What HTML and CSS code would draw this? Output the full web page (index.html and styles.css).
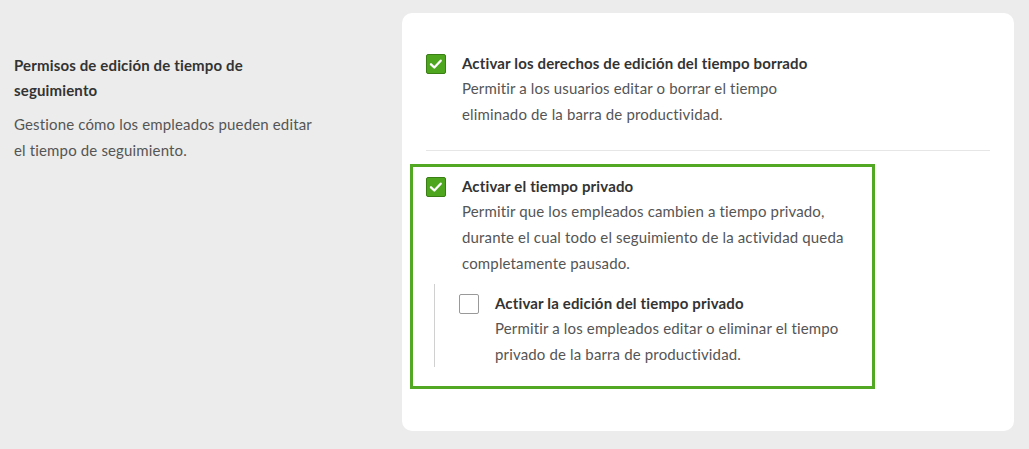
FILE: index.html
```html
<!DOCTYPE html>
<html lang="es">
<head>
<meta charset="utf-8">
<title>Permisos</title>
<link rel="stylesheet" href="styles.css">
</head>
<body>
<div class="page">
  <div class="intro">
    <h2 class="intro-title">Permisos de edición de tiempo de seguimiento</h2>
    <p class="intro-desc">Gestione cómo los empleados pueden editar el tiempo de seguimiento.</p>
  </div>
  <div class="card">
    <div class="option first">
      <span class="cb checked"><svg viewBox="0 0 20 20" width="20" height="20"><path d="M5 10.3l3.3 3.2 6.4-6.8" fill="none" stroke="#fff" stroke-width="2.3" stroke-linecap="round" stroke-linejoin="round"/></svg></span>
      <div class="text">
        <div class="title">Activar los derechos de edición del tiempo borrado</div>
        <div class="desc">Permitir a los usuarios editar o borrar el tiempo<br>eliminado de la barra de productividad.</div>
      </div>
    </div>
    <div class="divider"></div>
    <div class="highlight">
      <div class="option">
        <span class="cb checked"><svg viewBox="0 0 20 20" width="20" height="20"><path d="M5 10.3l3.3 3.2 6.4-6.8" fill="none" stroke="#fff" stroke-width="2.3" stroke-linecap="round" stroke-linejoin="round"/></svg></span>
        <div class="text">
          <div class="title">Activar el tiempo privado</div>
          <div class="desc">Permitir que los empleados cambien a tiempo privado,<br>durante el cual todo el seguimiento de la actividad queda<br>completamente pausado.</div>
        </div>
      </div>
      <div class="nested">
        <div class="option">
          <span class="cb"></span>
          <div class="text">
            <div class="title">Activar la edición del tiempo privado</div>
            <div class="desc">Permitir a los empleados editar o eliminar el tiempo<br>privado de la barra de productividad.</div>
          </div>
        </div>
      </div>
    </div>
  </div>
</div>
</body>
</html>
```

FILE: styles.css
```css
* { box-sizing: border-box; }
html, body { margin: 0; padding: 0; }
body {
  background: #ebeceb;
  font-family: "Lato", "Noto Sans", sans-serif;
  color: #333;
  width: 1029px;
  height: 449px;
  overflow: hidden;
  letter-spacing: 0.15px;
}
.page {
  display: flex;
  padding-top: 13px;
}
.intro {
  width: 402px;
  padding: 40px 60px 0 14px;
}
.intro-title {
  margin: 0;
  font-size: 15px;
  font-weight: 700;
  line-height: 25px;
  color: #333;
  width: 250px;
}
.intro-desc {
  margin: 8px 0 0;
  font-size: 15px;
  line-height: 26px;
  color: #555;
  width: 302px;
}
.card {
  width: 612px;
  height: 418px;
  background: #fff;
  border-radius: 10px;
  padding: 38px 24px 0 8px;
}
.option {
  display: flex;
  align-items: flex-start;
  gap: 16px;
}
.option.first {
  padding-left: 16px;
}
.cb {
  flex: none;
  width: 20px;
  height: 20px;
  margin-top: 3px;
  border: 1.5px solid #999;
  border-radius: 2px;
  background: #fff;
  display: flex;
  align-items: center;
  justify-content: center;
}
.cb.checked {
  background: #4ea61f;
  border: 1px solid #3a7f15;
}
.cb svg { display: block; flex: none; }
.title {
  font-size: 15px;
  font-weight: 700;
  line-height: 24px;
  color: #333;
}
.desc {
  font-size: 15px;
  line-height: 26px;
  color: #555;
}
.divider {
  height: 1px;
  background: #e6e6e6;
  margin: 23px 0 13px 16px;
}
.highlight {
  width: 465px;
  height: 225px;
  border: 3px solid #52a823;
  padding: 7px 0 0 13px;
}
.nested {
  margin: 8px 0 0 8px;
  border-left: 1px solid #d0d0d0;
  padding: 7px 0 0 24px;
  height: 83px;
}
```
